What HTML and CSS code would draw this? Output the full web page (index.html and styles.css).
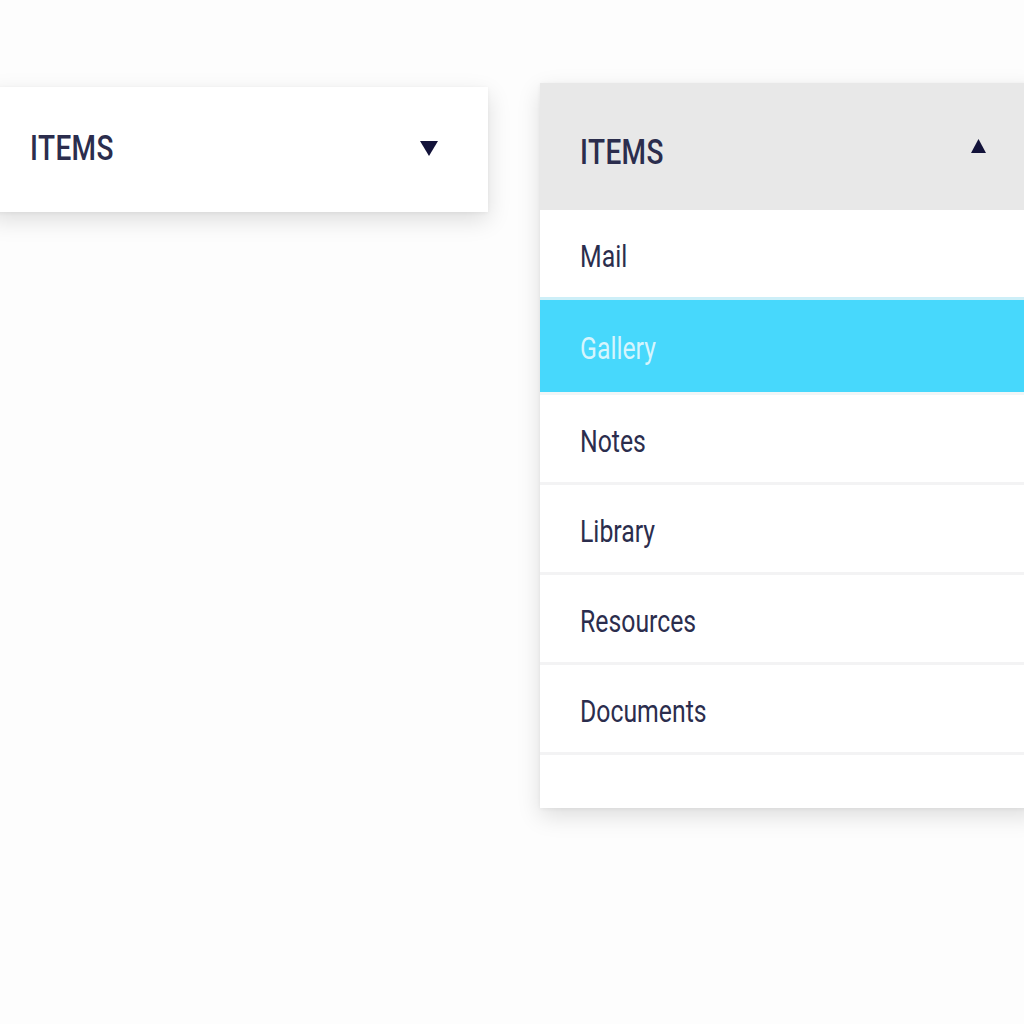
FILE: index.html
```html
<!DOCTYPE html>
<html>
<head>
<meta charset="utf-8">
<link rel="stylesheet" href="styles.css">
</head>
<body>
<div class="stage">
  <div class="dropdown closed">
    <div class="head">
      <span class="label">ITEMS</span>
      <svg class="arrow" width="20" height="18" viewBox="0 0 20 18"><path d="M1 2 H19 L10 17 Z" fill="#13133a"/></svg>
    </div>
  </div>
  <div class="dropdown open">
    <div class="head">
      <span class="label">ITEMS</span>
      <svg class="arrow" width="17" height="16" viewBox="0 0 17 16"><path d="M8.5 1 L16 15 H1 Z" fill="#13133a"/></svg>
    </div>
    <ul class="list">
      <li class="item"><span class="txt">Mail</span></li>
      <li class="item active"><span class="txt">Gallery</span></li>
      <li class="item"><span class="txt">Notes</span></li>
      <li class="item"><span class="txt">Library</span></li>
      <li class="item"><span class="txt">Resources</span></li>
      <li class="item"><span class="txt">Documents</span></li>
      <li class="item empty"></li>
    </ul>
  </div>
</div>
</body>
</html>
```
FILE: styles.css
```css
html, body {
  margin: 0;
  padding: 0;
  background: #fdfdfd;
  overflow: hidden;
  width: 1024px;
  height: 1024px;
}
.stage {
  display: flex;
  align-items: flex-start;
  padding-top: 83px;
  font-family: Roboto, "Noto Sans", sans-serif;
  color: #2b2d4d;
}
.dropdown {
  flex-shrink: 0;
  width: 498px;
  background: #ffffff;
  box-shadow: 0 8px 22px rgba(0, 0, 0, 0.13), 0 1px 4px rgba(0, 0, 0, 0.05);
}
.closed {
  margin-left: -10px;
  margin-top: 4px;
}
.open {
  margin-left: 52px;
}
.head {
  display: flex;
  align-items: center;
  justify-content: space-between;
  box-sizing: border-box;
  padding: 0 51px 0 40px;
}
.closed .head {
  height: 125px;
  padding-bottom: 2px;
}
.closed .arrow {
  margin-right: -2px;
  margin-top: -2px;
}
.open .head {
  height: 127px;
  background: #e8e8e8;
  padding-top: 12px;
}
.label {
  display: inline-block;
  font-size: 35px;
  font-weight: 500;
  letter-spacing: 0.5px;
  transform: scaleX(0.8);
  transform-origin: left center;
}
.arrow {
  display: block;
}
.open .arrow {
  margin-top: -14px;
}
.list {
  list-style: none;
  margin: 0;
  padding: 0;
}
.item {
  height: 82px;
  padding-top: 5px;
  display: flex;
  align-items: center;
  padding-left: 40px;
  border-bottom: 3px solid #f3f3f4;
  box-sizing: content-box;
}
.item:first-child {
  border-bottom-color: #cdeff8;
}
.item.active {
  background: #47d8fc;
  color: #d6f5fd;
  height: 87px;
  border-bottom-color: #f1f6f7;
}
.item.empty {
  height: 53px;
  padding-top: 0;
  border-bottom: none;
}
.txt {
  display: inline-block;
  font-size: 31px;
  font-weight: 400;
  transform: scaleX(0.8);
  transform-origin: left center;
}
```
